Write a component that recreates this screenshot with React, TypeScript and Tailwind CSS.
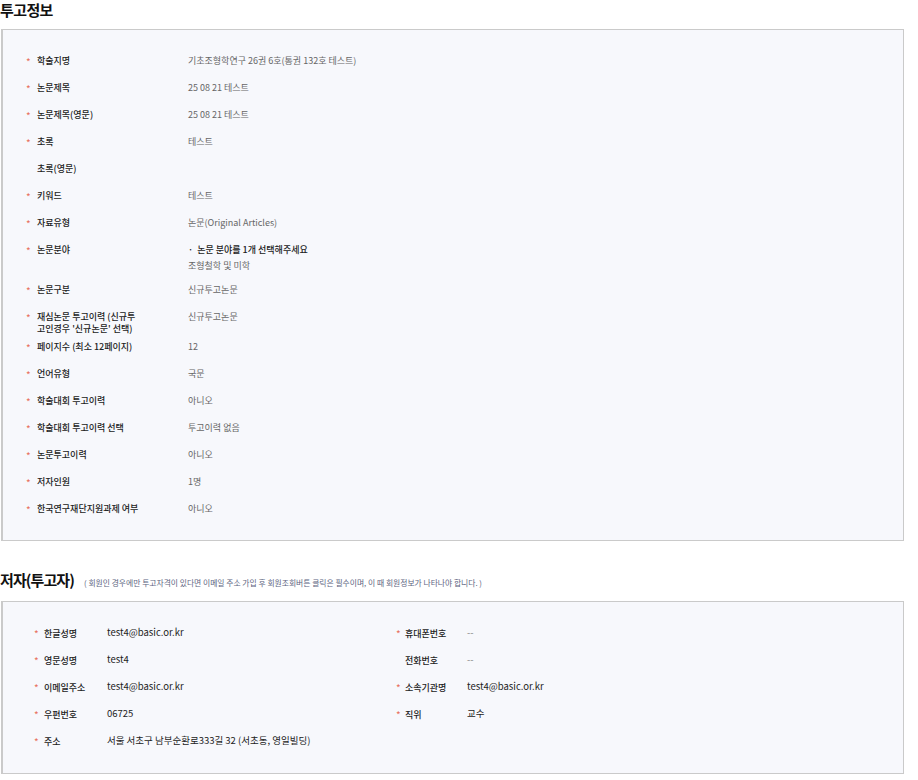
import React from "react";

const FONT = { fontFamily: "'Noto Sans CJK KR', 'Noto Sans', sans-serif" };

type Row = {
  label: React.ReactNode;
  value: React.ReactNode;
  star?: boolean;
  h?: string;
};

const Star = ({ show, w }: { show: boolean; w: string }) => (
  <span className={`${w} shrink-0 text-[10px] leading-[13px] text-[#e8705b]`}>
    {show ? "*" : ""}
  </span>
);

const rows: Row[] = [
  { label: "학술지명", value: "기초조형학연구 26권 6호(통권 132호 테스트)", star: true },
  { label: "논문제목", value: "25 08 21 테스트", star: true },
  { label: "논문제목(영문)", value: "25 08 21 테스트", star: true },
  { label: "초록", value: "테스트", star: true },
  { label: "초록(영문)", value: "", star: false },
  { label: "키워드", value: "테스트", star: true },
  { label: "자료유형", value: "논문(Original Articles)", star: true },
  {
    label: "논문분야",
    star: true,
    h: "h-[40px]",
    value: (
      <div>
        <div className="text-[#222] font-medium leading-[12px]">
          <span className="mr-[4px]">·</span>논문 분야를 1개 선택해주세요
        </div>
        <div className="mt-[4px] leading-[12px]">조형철학 및 미학</div>
      </div>
    ),
  },
  { label: "논문구분", value: "신규투고논문", star: true },
  {
    label: (
      <span className="block leading-[12px]">
        재심논문 투고이력 (신규투
        <br />
        고인경우 '신규논문' 선택)
      </span>
    ),
    value: "신규투고논문",
    star: true,
    h: "h-[30px]",
  },
  { label: "페이지수 (최소 12페이지)", value: "12", star: true },
  { label: "언어유형", value: "국문", star: true },
  { label: "학술대회 투고이력", value: "아니오", star: true },
  { label: "학술대회 투고이력 선택", value: "투고이력 없음", star: true },
  { label: "논문투고이력", value: "아니오", star: true },
  { label: "저자인원", value: "1명", star: true },
  { label: "한국연구재단지원과제 여부", value: "아니오", star: true },
];

type ARow = { label: string; value: string; star: boolean; muted?: boolean };

const leftA: ARow[] = [
  { label: "한글성명", value: "test4@basic.or.kr", star: true },
  { label: "영문성명", value: "test4", star: true },
  { label: "이메일주소", value: "test4@basic.or.kr", star: true },
  { label: "우편번호", value: "06725", star: true },
  { label: "주소", value: "서울 서초구 남부순환로333길 32 (서초동, 영일빌딩)", star: true },
];

const rightA: ARow[] = [
  { label: "휴대폰번호", value: "--", star: true, muted: true },
  { label: "전화번호", value: "--", star: false, muted: true },
  { label: "소속기관명", value: "test4@basic.or.kr", star: true },
  { label: "직위", value: "교수", star: true },
];

function AuthorRow({ r, labelW, starW }: { r: ARow; labelW: string; starW: string }) {
  return (
    <div className="flex h-[27px] pt-[8px]">
      <Star show={r.star} w={starW} />
      <span className={`${labelW} shrink-0 text-[9px] leading-[13px] font-medium text-[#222]`}>
        {r.label}
      </span>
      <span
        className={`text-[9.5px] leading-[10px] ${
          r.muted ? "text-[#888]" : "text-[#222]"
        }`}
      >
        {r.value}
      </span>
    </div>
  );
}

export default function App() {
  return (
    <div className="w-[918px] bg-white" style={FONT}>
      <div className="h-[29px] text-[15px] leading-[20px] font-bold text-[#111] tracking-[-0.6px]">
        투고정보
      </div>
      <div className="ml-px w-[903px] border border-l-2 border-[#cacaca] bg-[#f7f8fc] pl-[23px] pt-[17px] pb-[18px]">
        {rows.map((r, i) => (
          <div key={i} className={`flex ${r.h ?? "h-[27px]"} pt-[8px]`}>
            <Star show={!!r.star} w="w-[11px]" />
            <div className="w-[151px] shrink-0 text-[9px] leading-[12px] font-medium text-[#222]">
              {r.label}
            </div>
            <div className="text-[9px] leading-[12px] text-[#666]">{r.value}</div>
          </div>
        ))}
      </div>
      <div className="h-[60px] pt-[29px] flex items-baseline">
        <span className="text-[15px] leading-[20px] font-bold text-[#111] tracking-[-0.9px]">
          저자(투고자)
        </span>
        <span className="ml-[10px] text-[7.8px] text-[#5c6480]">
          ( 회원인 경우에만 투고자격이 있다면 이메일 주소 가입 후 회원조회버튼 클릭은 필수이며, 이 때 회원정보가 나타나야 합니다. )
        </span>
      </div>
      <div className="ml-px w-[903px] border border-l-2 border-[#cacaca] bg-[#f7f8fc] pl-[31px] pt-[17px] pb-[19px] flex">
        <div className="w-[362px] shrink-0">
          {leftA.map((r, i) => (
            <AuthorRow key={i} r={r} labelW="w-[63px]" starW="w-[10px]" />
          ))}
        </div>
        <div>
          {rightA.map((r, i) => (
            <AuthorRow key={i} r={r} labelW="w-[62px]" starW="w-[9px]" />
          ))}
        </div>
      </div>
    </div>
  );
}
